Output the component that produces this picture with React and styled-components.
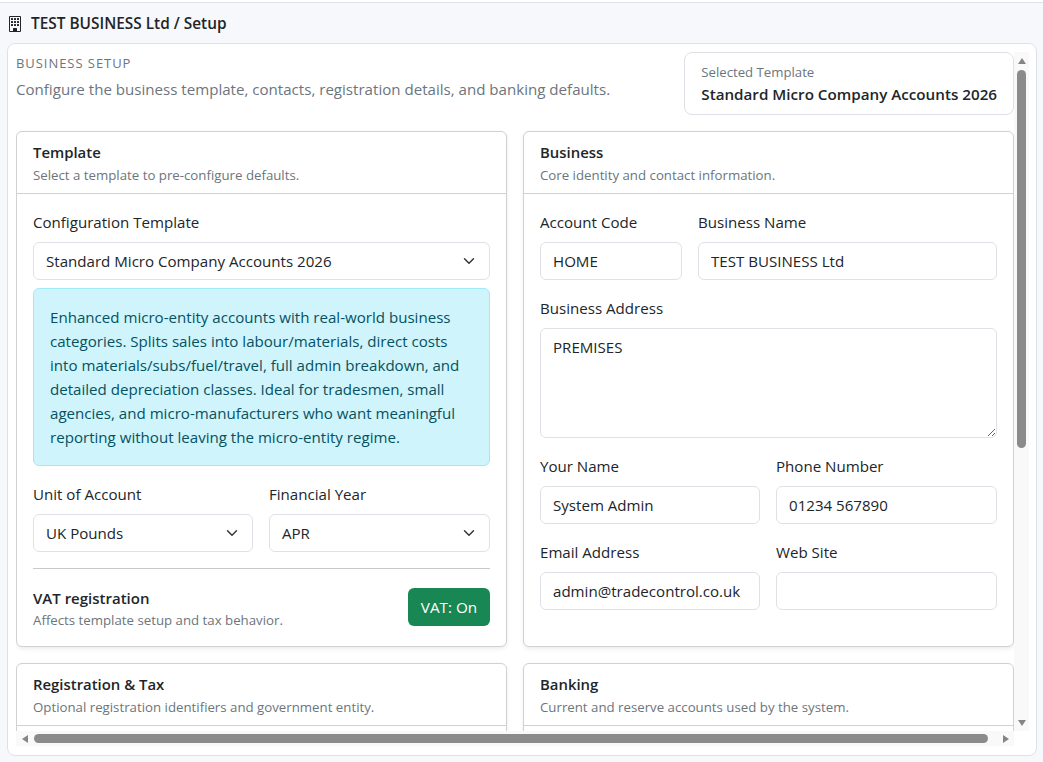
import styled, { createGlobalStyle } from "styled-components";
import { BsBuilding } from "react-icons/bs";

const chevron =
  "url(\"data:image/svg+xml,%3csvg xmlns='http://www.w3.org/2000/svg' viewBox='0 0 16 16'%3e%3cpath fill='none' stroke='%23343a40' stroke-linecap='round' stroke-linejoin='round' stroke-width='2' d='m2 5 6 6 6-6'/%3e%3c/svg%3e\")";

const GlobalStyle = createGlobalStyle`
  * {
    box-sizing: border-box;
  }
  html, body {
    margin: 0;
    height: 100%;
    background: #fff;
  }
  body {
    font-family: "Open Sans", "Noto Sans", sans-serif;
    font-size: 15.1px;
    line-height: 24px;
    color: #212529;
    overflow: hidden;
  }
  input, select, textarea {
    font: inherit;
  }
`;

const Shell = styled.div`
  height: 760px;
  margin-top: 2px;
  padding: 0 6px 6px 7px;
  display: flex;
  flex-direction: column;
  background: #f7f8fb;
  border-top: 1px solid #dee2e6;
`;

const TopBar = styled.header`
  height: 40px;
  flex: none;
  display: flex;
  align-items: center;
  gap: 8px;
  padding-top: 2px;
  font-size: 15.4px;
  font-weight: 600;
`;

const Panel = styled.main`
  flex: 1;
  min-height: 0;
  padding: 8px;
  display: grid;
  grid-template-columns: 998px 15px;
  grid-template-rows: 679px 15px;
  background: #fff;
  border: 1px solid #dee2e6;
  border-radius: 8px;
`;

const Viewport = styled.div`
  overflow: hidden;
`;

const ScrollBar = styled.div`
  display: flex;
  flex-direction: ${(p) => (p.$vertical ? "column" : "row")};
  background: #f9f9f9;
`;

const ScrollButton = styled.div`
  flex: none;
  width: ${(p) => (p.$vertical ? "15px" : "17px")};
  height: ${(p) => (p.$vertical ? "17px" : "15px")};
  display: flex;
  align-items: center;
  justify-content: center;
`;

const ScrollTrack = styled.div`
  flex: 1;
  min-width: 0;
  min-height: 0;
  display: flex;
  flex-direction: ${(p) => (p.$vertical ? "column" : "row")};
  padding: ${(p) => (p.$vertical ? "1px 3px" : "3px 1px")};
`;

const ScrollThumb = styled.div`
  width: ${(p) => (p.$vertical ? "9px" : `${p.$size}px`)};
  height: ${(p) => (p.$vertical ? `${p.$size}px` : "9px")};
  background: #8b8b8b;
  border-radius: 5px;
`;

const Intro = styled.section`
  display: flex;
  justify-content: space-between;
  align-items: flex-start;
  margin-bottom: 16px;
`;

const Eyebrow = styled.div`
  padding-top: 1px;
  font-size: 13px;
  line-height: 20px;
  letter-spacing: 0.95px;
  text-transform: uppercase;
  color: #6c757d;
`;

const Lead = styled.p`
  margin: 4px 0 0;
  line-height: 24px;
  color: #6c757d;
`;

const Selected = styled.aside`
  height: 63px;
  padding: 9px 16px;
  background: #fff;
  border: 1px solid #dee2e6;
  border-radius: 8px;
`;

const SelectedLabel = styled.div`
  font-size: 13.2px;
  line-height: 20px;
  color: #6c757d;
`;

const SelectedValue = styled.div`
  padding-top: 1px;
  font-size: 15.2px;
  line-height: 23px;
  font-weight: 600;
`;

const Columns = styled.div`
  display: grid;
  grid-template-columns: 1fr 1fr;
  gap: 16px;
`;

const Card = styled.section`
  background: #fff;
  border: 1px solid #cfd1d3;
  border-radius: 6px;
  box-shadow: 0 2px 4px rgba(0, 0, 0, 0.075);
`;

const CardHead = styled.div`
  height: 62px;
  padding: 8px 16px 0;
  border-bottom: 1px solid #cfd1d3;
`;

const CardTitle = styled.h2`
  margin: 0;
  font-size: 14.9px;
  line-height: 24px;
  font-weight: 600;
`;

const CardSub = styled.div`
  padding-top: 1px;
  font-size: 13.25px;
  line-height: 20px;
  color: #6c757d;
`;

const CardBody = styled.div`
  padding: 16px;
  display: flex;
  flex-direction: column;
  gap: 16px;
`;

const FieldRow = styled.div`
  display: grid;
  grid-template-columns: ${(p) => p.$cols || "220px 1fr"};
  gap: 16px;
`;

const Field = styled.label`
  display: block;
  min-width: 0;
`;

const LabelText = styled.span`
  display: block;
  margin-bottom: 8px;
`;

const Input = styled.input`
  display: block;
  width: 100%;
  height: 38px;
  padding: 0 12px;
  color: #212529;
  background: #fff;
  border: 1px solid #dee2e6;
  border-radius: 6px;
  outline: none;
`;

const TextArea = styled.textarea`
  display: block;
  width: 100%;
  height: 110px;
  padding: 6px 12px;
  line-height: 24px;
  color: #212529;
  background: #fff;
  border: 1px solid #dee2e6;
  border-radius: 6px;
  outline: none;
  resize: vertical;
`;

const Select = styled.select`
  display: block;
  width: 100%;
  height: 38px;
  padding: 0 36px 0 12px;
  appearance: none;
  color: #212529;
  background: #fff ${chevron} no-repeat right 12px center / 16px 12px;
  border: 1px solid #dee2e6;
  border-radius: 6px;
  outline: none;
`;

const Notice = styled.div`
  margin-top: -8px;
  padding: 16px;
  color: #055160;
  background: #cff4fc;
  border: 1px solid #9eeaf9;
  border-radius: 6px;
`;

const Rule = styled.hr`
  width: 100%;
  margin: 0;
  border: 0;
  border-top: 1px solid #c8c9ca;
`;

const VatRow = styled.div`
  display: flex;
  justify-content: space-between;
  align-items: center;
  margin-top: 3px;
  height: 38px;
  margin-bottom: 4px;
`;

const VatText = styled.div`
  margin-top: 2px;
`;

const VatTitle = styled.div`
  font-size: 15px;
  font-weight: 600;
  line-height: 22px;
`;

const VatButton = styled.button`
  width: 82px;
  height: 38px;
  padding: 0;
  font: inherit;
  font-size: 15.25px;
  color: #fff;
  background: #198754;
  border: 0;
  border-radius: 6px;
`;

const arrowPoints = {
  up: "4,0 8,6 0,6",
  down: "0,0 8,0 4,6",
  left: "0,4 6,0 6,8",
  right: "0,0 6,4 0,8",
};

function ScrollArrow({ dir }) {
  const vertical = dir === "up" || dir === "down";
  return (
    <ScrollButton $vertical={vertical}>
      <svg width={vertical ? 8 : 6} height={vertical ? 6 : 8} fill="#858585" aria-hidden="true">
        <polygon points={arrowPoints[dir]} />
      </svg>
    </ScrollButton>
  );
}

function TextField({ label, value }) {
  return (
    <Field>
      <LabelText>{label}</LabelText>
      <Input defaultValue={value} />
    </Field>
  );
}

function SelectField({ label, options }) {
  return (
    <Field>
      <LabelText>{label}</LabelText>
      <Select>
        {options.map((o) => (
          <option key={o}>{o}</option>
        ))}
      </Select>
    </Field>
  );
}

function CardHeader({ title, sub }) {
  return (
    <CardHead>
      <CardTitle>{title}</CardTitle>
      <CardSub>{sub}</CardSub>
    </CardHead>
  );
}

export default function App() {
  return (
    <>
      <GlobalStyle />
      <Shell>
        <TopBar>
          <BsBuilding size={16} />
          TEST BUSINESS Ltd / Setup
        </TopBar>
        <Panel>
          <Viewport>
            <Intro>
              <div>
                <Eyebrow>Business Setup</Eyebrow>
                <Lead>Configure the business template, contacts, registration details, and banking defaults.</Lead>
              </div>
              <Selected>
                <SelectedLabel>Selected Template</SelectedLabel>
                <SelectedValue>Standard Micro Company Accounts 2026</SelectedValue>
              </Selected>
            </Intro>
            <Columns>
              <Card>
                <CardHeader title="Template" sub="Select a template to pre-configure defaults." />
                <CardBody>
                  <SelectField label="Configuration Template" options={["Standard Micro Company Accounts 2026"]} />
                  <Notice>
                    Enhanced micro-entity accounts with real-world business categories. Splits sales into
                    labour/materials, direct costs into materials/subs/fuel/travel, full admin breakdown, and
                    detailed depreciation classes. Ideal for tradesmen, small agencies, and micro-manufacturers
                    who want meaningful reporting without leaving the micro-entity regime.
                  </Notice>
                  <FieldRow>
                    <SelectField label="Unit of Account" options={["UK Pounds"]} />
                    <SelectField label="Financial Year" options={["APR"]} />
                  </FieldRow>
                  <Rule />
                  <VatRow>
                    <VatText>
                      <VatTitle>VAT registration</VatTitle>
                      <CardSub>Affects template setup and tax behavior.</CardSub>
                    </VatText>
                    <VatButton type="button">VAT: On</VatButton>
                  </VatRow>
                </CardBody>
              </Card>
              <Card>
                <CardHeader title="Business" sub="Core identity and contact information." />
                <CardBody>
                  <FieldRow $cols="142px 1fr">
                    <TextField label="Account Code" value="HOME" />
                    <TextField label="Business Name" value="TEST BUSINESS Ltd" />
                  </FieldRow>
                  <Field>
                    <LabelText>Business Address</LabelText>
                    <TextArea defaultValue="PREMISES" />
                  </Field>
                  <FieldRow>
                    <TextField label="Your Name" value="System Admin" />
                    <TextField label="Phone Number" value="01234 567890" />
                  </FieldRow>
                  <FieldRow>
                    <TextField label="Email Address" value="admin@tradecontrol.co.uk" />
                    <TextField label="Web Site" value="" />
                  </FieldRow>
                </CardBody>
              </Card>
              <Card>
                <CardHeader title="Registration & Tax" sub="Optional registration identifiers and government entity." />
                <CardBody />
              </Card>
              <Card>
                <CardHeader title="Banking" sub="Current and reserve accounts used by the system." />
                <CardBody />
              </Card>
            </Columns>
          </Viewport>
          <ScrollBar $vertical>
            <ScrollArrow dir="up" />
            <ScrollTrack $vertical>
              <ScrollThumb $vertical $size={378} />
            </ScrollTrack>
            <ScrollArrow dir="down" />
          </ScrollBar>
          <ScrollBar>
            <ScrollArrow dir="left" />
            <ScrollTrack>
              <ScrollThumb $size={954} />
            </ScrollTrack>
            <ScrollArrow dir="right" />
          </ScrollBar>
        </Panel>
      </Shell>
    </>
  );
}
